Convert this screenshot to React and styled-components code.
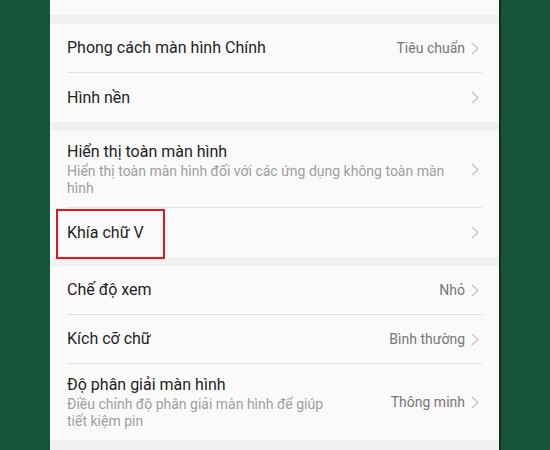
import React from 'react';
import styled, { createGlobalStyle } from 'styled-components';

const GlobalStyle = createGlobalStyle`
  html, body {
    margin: 0;
    padding: 0;
    background: #18533b;
    font-family: Roboto, 'Noto Sans', 'Liberation Sans', sans-serif;
  }
`;

const sections = [
  [
    { title: 'Phong cách màn hình Chính', value: 'Tiêu chuẩn' },
    { title: 'Hình nền' },
  ],
  [
    {
      title: 'Hiển thị toàn màn hình',
      sub: 'Hiển thị toàn màn hình đối với các ứng dụng không toàn màn hình',
    },
    { title: 'Khía chữ V', marked: true },
  ],
  [
    { title: 'Chế độ xem', value: 'Nhỏ' },
    { title: 'Kích cỡ chữ', value: 'Bình thường' },
    {
      title: 'Độ phân giải màn hình',
      sub: 'Điều chỉnh độ phân giải màn hình để giúp tiết kiệm pin',
      value: 'Thông minh',
    },
  ],
];

function Chevron() {
  return (
    <ChevronSvg width="8" height="13" viewBox="0 0 8 13">
      <path d="M1 1 L7 6.5 L1 12" fill="none" stroke="#c2c2c2" strokeWidth="1.2" />
    </ChevronSvg>
  );
}

function SettingRow({ item, last }) {
  return (
    <Row>
      <RowInner $last={last} $tall={!!item.sub}>
        <TextCol $withValue={!!item.value}>
          <Title>{item.title}</Title>
          {item.sub && <Sub>{item.sub}</Sub>}
        </TextCol>
        {item.value && <Value>{item.value}</Value>}
        <Chevron />
      </RowInner>
      {item.marked && <Highlight />}
    </Row>
  );
}

function App() {
  return (
    <>
      <GlobalStyle />
      <Page>
        <Phone>
          <TopCap />
          {sections.map((rows, i) => (
            <Section key={i}>
              {rows.map((item, j) => (
                <SettingRow key={item.title} item={item} last={j === rows.length - 1} />
              ))}
            </Section>
          ))}
        </Phone>
      </Page>
    </>
  );
}

const Page = styled.div`
  display: flex;
  width: 550px;
  height: 450px;
  overflow: hidden;
  padding-left: 50px;
  box-sizing: border-box;
`;

const Phone = styled.div`
  width: 449px;
  height: 450px;
  background: #f1f1f1;
  border-right: 2px solid #1c2a23;
  display: flex;
  flex-direction: column;
  gap: 9px;
  flex-shrink: 0;
`;

const TopCap = styled.div`
  height: 15px;
  background: #fafafa;
  flex-shrink: 0;
`;

const Section = styled.div`
  background: #fafafa;
  flex-shrink: 0;
`;

const Row = styled.div`
  position: relative;
  padding: 0 17px;
`;

const RowInner = styled.div`
  display: flex;
  align-items: center;
  min-height: 49px;
  padding: ${(p) => (p.$tall ? '10px 3px 10px 0' : '0 3px 0 0')};
  box-sizing: border-box;
  border-bottom: ${(p) => (p.$last ? 'none' : '1px solid #e4e4e4')};
`;

const TextCol = styled.div`
  flex: 1;
  min-width: 0;
  margin-right: ${(p) => (p.$withValue ? '56px' : '20px')};
`;

const Title = styled.div`
  font-size: 16px;
  line-height: 22px;
  color: #1f1f1f;
`;

const Sub = styled.div`
  font-size: 14px;
  line-height: 17px;
  color: #a0a0a0;
`;

const Value = styled.div`
  font-size: 14px;
  color: #777777;
  margin-right: 6px;
  white-space: nowrap;
`;

const ChevronSvg = styled.svg`
  flex-shrink: 0;
  display: block;
`;

const Highlight = styled.div`
  position: absolute;
  left: 6px;
  top: 1px;
  width: 109px;
  height: 50px;
  border: 2px solid #e8151b;
  box-sizing: border-box;
  pointer-events: none;
`;

export default App;
